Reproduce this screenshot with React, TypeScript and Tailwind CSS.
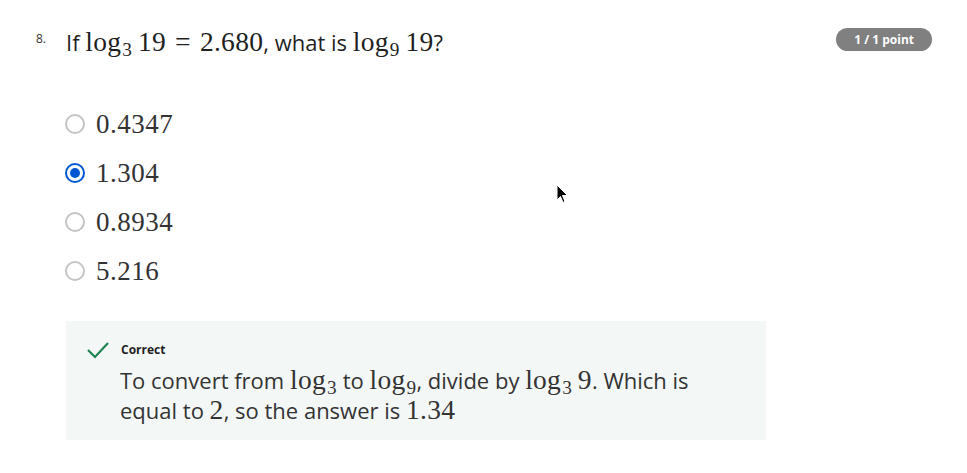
import React from "react";

const sans = { fontFamily: '"Open Sans", "Liberation Sans", sans-serif' };

function M({ children }: { children: React.ReactNode }) {
  return <span className="inline-block leading-none font-['Liberation_Serif',serif] text-[1.25em] tracking-[0.3px]">{children}</span>;
}

function Log({ base }: { base: string }) {
  return (
    <M>
      log<sub className="text-[0.7em] relative top-[0.25em] align-baseline ml-[1px] leading-none">{base}</sub>
    </M>
  );
}

const options = ["0.4347", "1.304", "0.8934", "5.216"];

export default function App() {
  return (
    <div className="relative w-[967px] h-[473px] bg-white text-[#1f1f1f]" style={sans}>
      <div className="flex pt-[27px] pl-[36px] pr-[35px] h-[57px]">
        <div className="text-[12px] text-[#333] pt-[3px] w-[30px]">8.</div>
        <div className="flex-1 text-[22px] leading-[30px] whitespace-nowrap">
          If <Log base="3" /> <M>19<span className="mx-[9px]">=</span>2.680</M>, what is <Log base="9" /> <M>19</M>?
        </div>
        <div className="h-[23px] mt-[1px] px-[18px] rounded-full bg-[#808080] text-white text-[12px] font-bold flex items-center">
          1 / 1 point
        </div>
      </div>

      <div className="flex flex-col gap-[19px] pl-[65px] pt-[52px]">
        {options.map((o, i) => (
          <div key={o} className="flex items-center gap-[11px] h-[30px]">
            {i === 1 ? (
              <span className="w-[20px] h-[20px] rounded-full border-[2px] border-[#0056d2] flex items-center justify-center">
                <span className="w-[10px] h-[10px] rounded-full bg-[#0056d2]" />
              </span>
            ) : (
              <span className="w-[20px] h-[20px] rounded-full border-[2px] border-[#c4c4c4]" />
            )}
            <span className="font-['Liberation_Serif',serif] text-[27px] text-[#333] tracking-[0.5px]">{o}</span>
          </div>
        ))}
      </div>

      <div className="ml-[66px] mt-[35px] w-[700px] h-[119px] bg-[#f3f8f7] pl-[21px] pt-[19px]">
        <div className="flex items-center gap-[11px] h-[20px]">
          <svg width="23" height="20" viewBox="0 0 23 20" fill="none">
            <path d="M1 10 L8 17 L21 3" stroke="#1f8354" strokeWidth="2.2" />
          </svg>
          <span className="text-[12px] font-bold text-[#1f1f1f]">Correct</span>
        </div>
        <div className="pl-[33px] text-[22px] leading-[30px] text-[#333] mt-[5px] w-[612px]">
          To convert from <Log base="3" /> to <Log base="9" />, divide by <Log base="3" /> <M>9</M>. Which is equal to <M>2</M>, so the answer is <M>1.34</M>
        </div>
      </div>

      <svg className="absolute left-[556px] top-[184px]" width="14" height="22" viewBox="0 0 14 22">
        <path d="M1 1 L1 16 L4.5 12.5 L7 18.5 L9 17.5 L6.5 11.5 L11.5 11.5 Z" fill="#000" stroke="#fff" strokeWidth="1" />
      </svg>
    </div>
  );
}
